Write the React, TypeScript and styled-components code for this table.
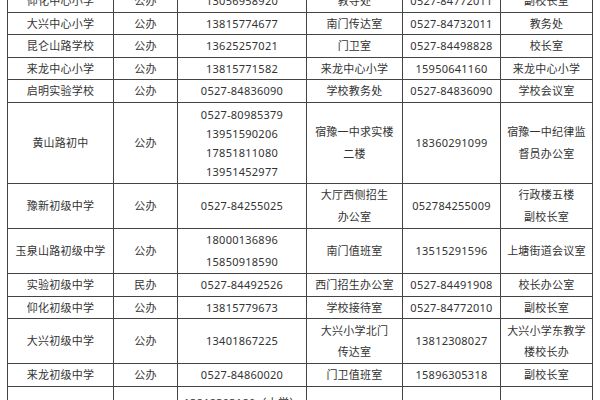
import React from 'react';
import styled, { createGlobalStyle } from 'styled-components';

const GlobalStyle = createGlobalStyle`
  html, body {
    margin: 0;
    padding: 0;
    background: #fff;
  }
  body {
    width: 600px;
    height: 400px;
    overflow: hidden;
  }
`;

const Page = styled.div`
  padding-left: 7px;
  margin-top: -11px;
`;

const Table = styled.table`
  border-collapse: collapse;
  table-layout: fixed;
  width: 586px;
  font-family: "Noto Sans", "Noto Sans CJK SC", sans-serif;
  font-size: 11px;
  color: #333;
`;

const Col = styled.col<{ $w: number }>`
  width: ${p => p.$w}px;
`;

const Row = styled.tr<{ $h: number }>`
  height: ${p => p.$h}px;
`;

const Cell = styled.td<{ $tight?: boolean }>`
  border: 1px solid #454545;
  text-align: center;
  vertical-align: middle;
  padding: 0;
  white-space: nowrap;
  line-height: ${p => (p.$tight ? 19 : 21.5)}px;
  letter-spacing: 0.25px;
`;

type Value = string | string[];

interface School {
  h: number;
  cells: Value[];
}

const widths = [106, 64, 129, 96, 98, 92];

const schools: School[] = [
  { h: 22, cells: ['仰化中心小学', '公办', '13056958920', '教导处', '0527-84772011', '副校长室'] },
  { h: 22, cells: ['大兴中心小学', '公办', '13815774677', '南门传达室', '0527-84732011', '教务处'] },
  { h: 22, cells: ['昆仑山路学校', '公办', '13625257021', '门卫室', '0527-84498828', '校长室'] },
  { h: 22, cells: ['来龙中心小学', '公办', '13815771582', '来龙中心小学', '15950641160', '来龙中心小学'] },
  { h: 22, cells: ['启明实验学校', '公办', '0527-84836090', '学校教务处', '0527-84836090', '学校会议室'] },
  {
    h: 81,
    cells: [
      '黄山路初中',
      '公办',
      ['0527-80985379', '13951590206', '17851811080', '13951452977'],
      ['宿豫一中求实楼', '二楼'],
      '18360291099',
      ['宿豫一中纪律监', '督员办公室'],
    ],
  },
  {
    h: 45,
    cells: ['豫新初级中学', '公办', '0527-84255025', ['大厅西侧招生', '办公室'], '052784255009', ['行政楼五楼', '副校长室']],
  },
  {
    h: 45,
    cells: ['玉泉山路初级中学', '公办', ['18000136896', '15850918590'], '南门值班室', '13515291596', '上塘街道会议室'],
  },
  { h: 23, cells: ['实验初级中学', '民办', '0527-84492526', '西门招生办公室', '0527-84491908', '校长办公室'] },
  { h: 22, cells: ['仰化初级中学', '公办', '13815779673', '学校接待室', '0527-84772010', '副校长室'] },
  {
    h: 45,
    cells: ['大兴初级中学', '公办', '13401867225', ['大兴小学北门', '传达室'], '13812308027', ['大兴小学东教学', '楼校长办']],
  },
  { h: 23, cells: ['来龙初级中学', '公办', '0527-84860020', '门卫值班室', '15896305318', '副校长室'] },
  {
    h: 88,
    cells: [
      '新区实验学校',
      '公办',
      ['13812303180（小学）', '13815730286（初中）', '0527-84219990', '13952798512'],
      '门卫值班室',
      '0527-84219990',
      '校长室',
    ],
  },
];

const renderValue = (v: Value) =>
  Array.isArray(v)
    ? v.map((line, i) => (
        <React.Fragment key={i}>
          {i > 0 && <br />}
          {line}
        </React.Fragment>
      ))
    : v;

export default function App() {
  return (
    <>
      <GlobalStyle />
      <Page>
        <Table>
          <colgroup>
            {widths.map((w, i) => (
              <Col key={i} $w={w} />
            ))}
          </colgroup>
          <tbody>
            {schools.map((s, r) => (
              <Row key={r} $h={s.h}>
                {s.cells.map((c, i) => (
                  <Cell key={i} $tight={Array.isArray(c) && c.length > 2}>
                    {renderValue(c)}
                  </Cell>
                ))}
              </Row>
            ))}
          </tbody>
        </Table>
      </Page>
    </>
  );
}
